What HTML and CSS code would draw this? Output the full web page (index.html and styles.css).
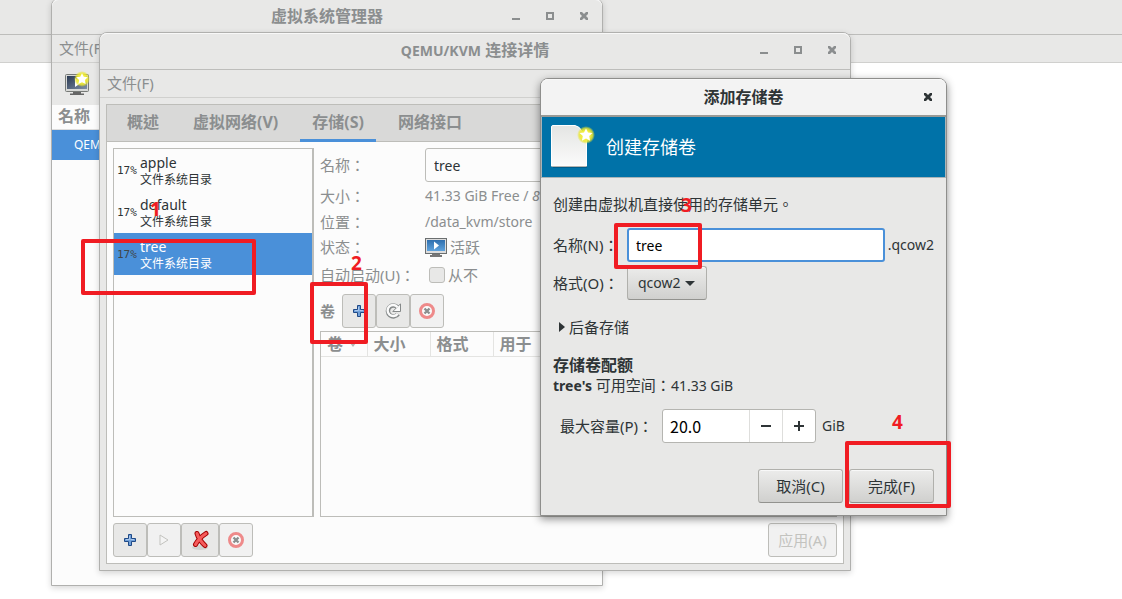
FILE: index.html
```html
<!DOCTYPE html>
<html lang="zh-CN">
<head>
  <meta charset="utf-8" />
  <title>添加存储卷</title>
  <link rel="stylesheet" href="styles.css">
</head>
<body>

<svg class="defs" width="0" height="0">
  <defs>
    <linearGradient id="screen-dark" x1="0" y1="0" x2="1" y2="1">
      <stop offset="0" stop-color="#2b3a52" />
      <stop offset="1" stop-color="#7f8fa6" />
    </linearGradient>
    <linearGradient id="screen-blue" x1="0" y1="0" x2="0" y2="1">
      <stop offset="0" stop-color="#2f6fae" />
      <stop offset="1" stop-color="#5fa3dd" />
    </linearGradient>
    <linearGradient id="paper" x1="0" y1="0" x2="0" y2="1">
      <stop offset="0" stop-color="#e4e5e3" />
      <stop offset="1" stop-color="#fbfbfb" />
    </linearGradient>
    <radialGradient id="glow">
      <stop offset="0.5" stop-color="#f2ee3c" />
      <stop offset="0.75" stop-color="#ece82e" stop-opacity="0.8" />
      <stop offset="1" stop-color="#e3e02e" stop-opacity="0" />
    </radialGradient>
  </defs>
  <symbol id="minimize" viewBox="0 0 8 8"><path d="M0 6h8v2H0z" /></symbol>
  <symbol id="maximize" viewBox="0 0 8 8"><path d="M0 0h8v8H0zM2 2v4h4V2z" fill-rule="evenodd" /></symbol>
  <symbol id="close" viewBox="0 0 8 8"><path d="M0 0h2l2 2 2-2h2v2L6 4l2 2v2H6L4 6 2 8H0V6l2-2-2-2z" /></symbol>
  <symbol id="star" viewBox="0 0 18 18">
    <circle cx="9" cy="9" r="9" fill="url(#glow)" />
    <path d="M9 2.500l2 4 4.500.5-3.300 3.100.9 4.600L9 12.600l-4.100 2.100.9-4.600L2.500 7l4.500-.5z" fill="#fff" />
  </symbol>
  <symbol id="plus" viewBox="0 0 12 12">
    <path d="M4.500.5h3v4h4v3h-4v4h-3v-4h-4v-3h4z" fill="#6f9fd8" stroke="#204a87" />
    <path d="M5.500 2v3.500H2M6.500 5.500H10" fill="none" stroke="#a9c8ee" />
  </symbol>
  <symbol id="stop" viewBox="0 0 16 16">
    <circle cx="8" cy="8" r="6.500" fill="#fafafa" stroke="#ee8a8a" stroke-width="3" />
    <path d="M5.500 5.500l5 5M10.500 5.500l-5 5" stroke="#8b8f8f" stroke-width="2.400" />
  </symbol>
</svg>

<div class="desktop">
  <div class="panel panel-top"></div>
  <div class="panel panel-menu"></div>

  <div class="window manager">
    <div class="titlebar">
      <h1>虚拟系统管理器</h1>
      <div class="window-buttons">
        <button aria-label="最小化"><svg><use href="#minimize" /></svg></button>
        <button aria-label="最大化"><svg><use href="#maximize" /></svg></button>
        <button aria-label="关闭"><svg><use href="#close" /></svg></button>
      </div>
    </div>
    <div class="menubar">文件(F)</div>
    <div class="toolbar">
      <svg width="26" height="26" viewBox="0 0 26 26">
        <rect x="1.500" y="3.500" width="23" height="17" rx="1" fill="#d8d9d7" stroke="#777a77" />
        <rect x="3" y="5" width="20" height="13" fill="url(#screen-dark)" />
        <path d="M11 7v9l6-4z" fill="#fff" />
        <path d="M9 21h8v1.500h3V24H6v-1.500h3z" fill="#666" />
        <use href="#star" x="10" y="0" width="16" height="16" />
      </svg>
    </div>
    <div class="list-header">名称</div>
    <div class="connection">QEMU/KVM</div>
  </div>

  <div class="window details">
    <div class="titlebar">
      <h1><span class="latin">QEMU/KVM</span> 连接详情</h1>
      <div class="window-buttons">
        <button aria-label="最小化"><svg><use href="#minimize" /></svg></button>
        <button aria-label="最大化"><svg><use href="#maximize" /></svg></button>
        <button aria-label="关闭"><svg><use href="#close" /></svg></button>
      </div>
    </div>
    <div class="menubar">文件(F)</div>

    <div class="notebook">
      <div class="tabs">
        <button>概述</button>
        <button>虚拟网络(V)</button>
        <button class="active">存储(S)</button>
        <button>网络接口</button>
      </div>
      <div class="page">
        <ul class="pools">
          <li><span class="usage">17%</span><div><b>apple</b><small>文件系统目录</small></div></li>
          <li><span class="usage">17%</span><div><b>default</b><small>文件系统目录</small></div></li>
          <li class="selected"><span class="usage">17%</span><div><b>tree</b><small>文件系统目录</small></div></li>
        </ul>

        <div class="pool">
          <div class="pool-info">
            <label for="pool-name">名称：</label>
            <input id="pool-name" type="text" value="tree">
            <span>大小：</span>
            <span class="latin nowrap">41.33 GiB Free / <i>8</i></span>
            <span>位置：</span>
            <span class="latin">/data_kvm/store</span>
            <span>状态：</span>
            <span class="state">
              <svg width="22" height="20" viewBox="0 0 22 20">
                <rect x="0.500" y="1.500" width="21" height="15" fill="#ddd" stroke="#6b6f70" />
                <rect x="2" y="3" width="18" height="11" fill="url(#screen-blue)" />
                <path d="M9 4.500v8l5-4z" fill="#fff" />
                <path d="M7 17h8v1h2v2H5v-2h2z" fill="#777" />
              </svg>
              活跃
            </span>
            <label class="nowrap" for="autostart">自动启动(U)：</label>
            <span class="never"><input id="autostart" type="checkbox"><label for="autostart">从不</label></span>
          </div>

          <div class="volume-bar">
            <b>卷</b>
            <button aria-label="新建卷"><svg width="12" height="12"><use href="#plus" /></svg></button>
            <button aria-label="刷新">
              <svg width="16" height="16" viewBox="0 0 16 16">
                <path d="M12.500 4.200A5.500 5.500 0 1 0 13 11" fill="none" stroke="#858989" stroke-width="4.500" />
                <path d="M15.500.8v7.700H7.800z" fill="#fafafa" stroke="#858989" />
                <path d="M12.500 4.200A5.500 5.500 0 1 0 12.600 10.700" fill="none" stroke="#fafafa" stroke-width="2.400" />
              </svg>
            </button>
            <button class="off" aria-label="删除卷"><svg width="16" height="16"><use href="#stop" /></svg></button>
          </div>

          <div class="volumes">
            <table>
              <thead>
                <tr><th>卷<i class="sort"></i></th><th>大小</th><th>格式</th><th>用于</th></tr>
              </thead>
            </table>
          </div>
        </div>

        <div class="actions">
          <button aria-label="添加池"><svg width="12" height="12"><use href="#plus" /></svg></button>
          <button class="off" aria-label="启动池">
            <svg width="10" height="12" viewBox="0 0 10 12"><path d="M1 1v10l8-5z" fill="#f4f4f4" stroke="#c3c3bf" /></svg>
          </button>
          <button class="wide" aria-label="停止池">
            <svg width="18" height="20" viewBox="0 0 18 20">
              <ellipse cx="9" cy="17.500" rx="8" ry="2.500" fill="#d2d2d0" />
              <path d="M6 3.500Q8 10 14 15.500M15 3.500Q8 8 4.500 14.500" fill="none" stroke="#a40000" stroke-width="5" stroke-linecap="round" />
              <path d="M6 3.500Q8 10 14 15.500M15 3.500Q8 8 4.500 14.500" fill="none" stroke="#f55b5b" stroke-width="3" stroke-linecap="round" />
            </svg>
          </button>
          <button class="off" aria-label="删除池"><svg width="16" height="16"><use href="#stop" /></svg></button>
          <button class="apply" disabled>应用(A)</button>
        </div>
      </div>
    </div>
  </div>

  <div class="window dialog">
    <div class="titlebar">
      <h1>添加存储卷</h1>
      <div class="window-buttons">
        <button aria-label="关闭"><svg><use href="#close" /></svg></button>
      </div>
    </div>
    <div class="banner">
      <svg width="46" height="46" viewBox="0 0 46 46">
        <path d="M3 3h23q12 4 11 15v26H3z" fill="#003f5f" opacity="0.4" />
        <path d="M3 1.500h22q5 1 7 6 5 2 4.500 6v28.500h-35V3q0-1.500 1.500-1.500z" fill="url(#paper)" stroke="#fff" />
        <path d="M1.500 42.500h35" stroke="#b5b5b1" />
        <use href="#star" x="27" y="2" width="18" height="18" />
      </svg>
      <h2>创建存储卷</h2>
    </div>
    <form>
      <p class="intro">创建由虚拟机直接使用的存储单元。</p>
      <div class="fields">
        <label for="vol-name">名称(N)：</label>
        <div class="name-field"><input id="vol-name" type="text" value="tree"><span class="latin">.qcow2</span></div>
        <label for="vol-format">格式(O)：</label>
        <div class="select">
          <select id="vol-format"><option>qcow2</option><option>raw</option></select>
        </div>
      </div>
      <details>
        <summary>后备存储</summary>
      </details>
      <h3>存储卷配额</h3>
      <p class="free"><b class="latin">tree's</b> 可用空间：<span class="latin">41.33 GiB</span></p>
      <div class="capacity">
        <label for="capacity">最大容量(P)：</label>
        <div class="spin">
          <input id="capacity" type="text" value="20.0">
          <button type="button" aria-label="减少"><svg width="12" height="12" viewBox="0 0 12 12"><path d="M1 5h10v2H1z" /></svg></button>
          <button type="button" aria-label="增加"><svg width="12" height="12" viewBox="0 0 12 12"><path d="M1 5h4V1h2v4h4v2H7v4H5V7H1z" /></svg></button>
        </div>
        <span class="latin">GiB</span>
      </div>
      <div class="buttons">
        <button type="button">取消(C)</button>
        <button type="button">完成(F)</button>
      </div>
    </form>
  </div>

  <!-- numbered steps -->
  <div class="mark mark-1"></div>
  <div class="mark mark-2"></div>
  <div class="mark mark-3"></div>
  <div class="mark mark-4"></div>
  <span class="step step-1">1</span>
  <span class="step step-2">2</span>
  <span class="step step-3">3</span>
  <span class="step step-4">4</span>
</div>

</body>
</html>
```
FILE: styles.css
```css
* {
  box-sizing: border-box;
}

/* locl off keeps the colons and full stops centred in their cell */
body {
  margin: 0;
  background: #fff;
  color: #2e3436;
  font-family: "Noto Sans", "Noto Sans CJK TC", sans-serif;
  font-feature-settings: "locl" 0;
  font-size: 15px;
  line-height: 20px;
}

h1, h2, h3, p, ul {
  margin: 0;
  padding: 0;
}

button, input, select {
  margin: 0;
  color: inherit;
  font: inherit;
}

button {
  display: flex;
  align-items: center;
  justify-content: center;
  padding: 0;
}

svg {
  display: block;
  flex: none;
}

.defs {
  position: absolute;
}

.latin {
  font-size: 14px;
}

.nowrap {
  white-space: nowrap;
}

.desktop {
  position: relative;
  min-height: 100vh;
  overflow: hidden;
}

.panel {
  background: #e8e8e7;
  border-bottom: 1px solid #bdbdbb;
}

.panel-top {
  height: 35px;
}

.panel-menu {
  height: 28px;
  border-color: #d0d0ce;
}

/* windows */

.window {
  position: absolute;
  display: flex;
  flex-direction: column;
  border: 1px solid #b0b0ae;
  border-radius: 8px 8px 0 0;
  background: #e8e8e7;
  color: #8b8e8f;
  box-shadow: 0 2px 6px rgba(0, 0, 0, 0.16);
}

.manager {
  left: 51px;
  top: -2px;
  width: 552px;
  height: 588px;
  background: #fcfcfc;
}

.details {
  left: 99px;
  top: 32px;
  width: 752px;
  height: 539px;
}

.dialog {
  left: 540px;
  top: 78px;
  width: 407px;
  height: 438px;
  border-color: #8e8e8c;
  color: #2e3436;
  box-shadow: 0 3px 8px rgba(0, 0, 0, 0.45);
}

.titlebar {
  position: relative;
  display: flex;
  align-items: center;
  justify-content: center;
  height: 37px;
  padding-bottom: 2px;
  border-bottom: 1px solid #bdbdbb;
  border-radius: 7px 7px 0 0;
  background: #e8e8e7;
  box-shadow: inset 0 1px #f8f8f8;
}

.manager .titlebar {
  height: 36px;
}

.dialog .titlebar {
  height: 38px;
  padding-bottom: 0;
  border-bottom: 2px solid #999a96;
  background: #f3f3f3;
}

.titlebar h1 {
  font-size: 16px;
  line-height: 20px;
}

.titlebar .latin {
  font-size: 14px;
}

.window-buttons {
  position: absolute;
  right: 14px;
  display: flex;
  gap: 26px;
}

.window-buttons button {
  width: 8px;
  height: 8px;
  border: 0;
  background: none;
}

.window-buttons svg {
  width: 8px;
  height: 8px;
  fill: currentColor;
}

.menubar {
  height: 28px;
  padding: 3px 7px;
  border-bottom: 1px solid #d0d0ce;
  background: #e8e8e7;
}

/* manager window */

.toolbar {
  height: 42px;
  padding: 8px 12px;
  background: #e8e8e7;
}

.list-header {
  height: 25px;
  padding: 1px 6px;
  border-bottom: 1px solid #ddd;
  font-size: 16px;
  font-weight: bold;
}

.connection {
  padding: 5px 22px;
  background: #4a90d9;
  color: #fff;
  font-size: 12px;
}

/* connection details */

.notebook {
  display: flex;
  flex: 1;
  flex-direction: column;
  margin: 6px;
  border: 1px solid #bdbdb9;
  background: #fcfcfc;
}

.tabs {
  display: flex;
  gap: 10px;
  height: 37px;
  padding: 0 8px;
  border-bottom: 1px solid #bdbdb9;
  background: #d9d9d8;
}

.tabs button {
  height: 37px;
  padding: 0 12px;
  border: 0;
  border-bottom: 3px solid transparent;
  background: none;
  font-size: 16px;
  font-weight: bold;
}

.tabs .active {
  border-color: #4a90d9;
}

.page {
  display: grid;
  flex: 1;
  grid-template-columns: 201px minmax(0, 1fr);
  grid-template-rows: minmax(0, 1fr) 34px;
  gap: 6px;
  padding: 6px;
}

.pools {
  border: 1px solid #bdbdb9;
  border-right-width: 2px;
  list-style: none;
  color: #2e3436;
}

.pools li {
  display: flex;
  align-items: center;
  gap: 3px;
  height: 42px;
  padding: 2px 0 0 3px;
}

.pools b,
.pools small {
  display: block;
  font-size: 14px;
  font-weight: normal;
  line-height: 18px;
}

.pools small {
  font-size: 12px;
  line-height: 16px;
}

.pools .usage {
  width: 20px;
  font-family: "DejaVu Sans Mono", monospace;
  font-size: 11px;
}

.pools .selected {
  background: #4a90d9;
  color: #fff;
}

.selected .usage {
  color: #40464a;
}

.pool {
  display: flex;
  flex-direction: column;
}

.pool-info {
  display: grid;
  grid-template-columns: 105px minmax(0, 1fr);
  grid-template-rows: 34px 28px 24px 26px 30px;
  align-items: center;
}

.pool-info input[type="text"] {
  width: 100%;
  height: 34px;
  padding: 0 8px;
  border: 1px solid #bdbdb9;
  border-radius: 3px;
  background: #fcfcfc;
  color: #2e3436;
  font-size: 14px;
}

.state,
.never {
  display: flex;
  align-items: center;
  gap: 3px;
}

.never {
  padding-left: 4px;
}

.never input {
  appearance: none;
  width: 16px;
  height: 16px;
  border: 1px solid #bdbdb9;
  border-radius: 3px;
  background: #e8e8e7;
}

.volume-bar {
  display: flex;
  align-items: center;
  margin: 4px 0 3px;
}

.volume-bar b {
  width: 22px;
}

.volume-bar button,
.actions button {
  width: 34px;
  height: 34px;
  border: 1px solid #bdbdb9;
  border-radius: 3px;
  background: #e8e8e7;
}

.volume-bar .off,
.actions .off,
.actions .apply {
  background: #f1f1f1;
}

.volumes {
  flex: 1;
  border: 1px solid #bdbdb9;
}

.volumes table {
  width: 100%;
  border-collapse: collapse;
  table-layout: fixed;
}

.volumes th {
  width: 63px;
  height: 24px;
  padding: 0 6px;
  border-right: 1px solid #e4e4e2;
  border-bottom: 1px solid #e4e4e2;
  font-size: 16px;
  text-align: left;
}

.volumes th:first-child {
  width: 46px;
}

.volumes th:last-child {
  width: auto;
}

.sort {
  display: inline-block;
  margin-left: 7px;
  border: 3px solid transparent;
  border-top: 4px solid #b5b5b3;
  border-bottom: 0;
  vertical-align: middle;
}

.actions {
  display: flex;
  grid-column: 1 / -1;
}

.actions .wide {
  width: 38px;
}

.actions .apply {
  width: 69px;
  margin-left: auto;
  color: #c3c3bf;
}

/* new volume dialog */

.banner {
  display: flex;
  align-items: center;
  gap: 10px;
  height: 62px;
  padding: 0 8px;
  border: 1px solid #a9b4b8;
  border-top: 0;
  background: #0072a8;
  color: #fff;
}

.banner h2 {
  font-size: 18px;
  font-weight: normal;
}

form {
  padding: 16px 12px 12px;
}

.fields {
  display: grid;
  grid-template-columns: 74px minmax(0, 1fr);
  gap: 4px 0;
  align-items: center;
  margin-top: 14px;
  white-space: nowrap;
}

.name-field {
  display: flex;
  align-items: center;
  gap: 3px;
}

.name-field input {
  width: 258px;
  height: 34px;
  padding: 0 7px;
  border: 2px solid #4a90d9;
  border-radius: 3px;
  outline: 0;
  background: #fff;
  color: #000;
  font-size: 14px;
}

.select {
  position: relative;
  width: 80px;
}

.select::after {
  content: "";
  position: absolute;
  right: 12px;
  top: 15px;
  border: 5px solid transparent;
  border-top-color: #2e3436;
  border-bottom: 0;
  pointer-events: none;
}

.select select,
.buttons button {
  width: 100%;
  height: 34px;
  padding: 0 10px;
  border: 1px solid #b0b0ac;
  border-bottom-color: #92928e;
  border-radius: 3px;
  background: linear-gradient(#ececeb, #d0d0ce);
  box-shadow: inset 0 1px #f8f8f8;
}

.select select {
  display: block;
  appearance: none;
  font-size: 14px;
}

details {
  margin: 17px 0 0 6px;
}

summary {
  display: flex;
  align-items: center;
  gap: 4px;
  list-style: none;
}

summary::before {
  content: "";
  border: 5px solid transparent;
  border-left: 6px solid #2e3436;
  border-right: 0;
}

h3 {
  margin-top: 18px;
  font-size: 16px;
  line-height: 20px;
}

.capacity {
  display: flex;
  align-items: center;
  gap: 6px;
  margin-top: 13px;
  padding-left: 7px;
}

.capacity label {
  width: 96px;
  white-space: nowrap;
}

.spin {
  display: flex;
  width: 154px;
  height: 34px;
  border: 1px solid #b5b5b1;
  border-radius: 3px;
  background: #fff;
}

.spin input {
  flex: 1;
  min-width: 0;
  padding: 0 7px;
  border: 0;
  background: none;
  color: #000;
  font-family: "Noto Sans CJK TC", sans-serif;
  font-size: 16px;
}

.spin button {
  width: 33px;
  border: 0;
  border-left: 1px solid #dededc;
  background: none;
}

.spin svg {
  fill: #2e3436;
}

.buttons {
  display: flex;
  gap: 6px;
  justify-content: flex-end;
  margin-top: 26px;
}

.buttons button {
  width: 85px;
}

/* step marks */

.mark {
  position: absolute;
  border: 4px solid #f01c23;
  border-radius: 2px;
}

.mark-1 {
  left: 81px;
  top: 239px;
  width: 175px;
  height: 56px;
}

.mark-2 {
  left: 310px;
  top: 282px;
  width: 58px;
  height: 62px;
}

.mark-3 {
  left: 614px;
  top: 223px;
  width: 88px;
  height: 46px;
}

.mark-4 {
  left: 845px;
  top: 441px;
  width: 106px;
  height: 67px;
}

.step {
  position: absolute;
  color: #f01c23;
  font-size: 19px;
  font-weight: bold;
}

.step-1 {
  left: 150px;
  top: 199px;
  text-shadow: 0 0 1px #fc9;
}

.step-2 {
  left: 351px;
  top: 253px;
}

.step-3 {
  left: 681px;
  top: 195px;
}

.step-4 {
  left: 892px;
  top: 412px;
}
```
